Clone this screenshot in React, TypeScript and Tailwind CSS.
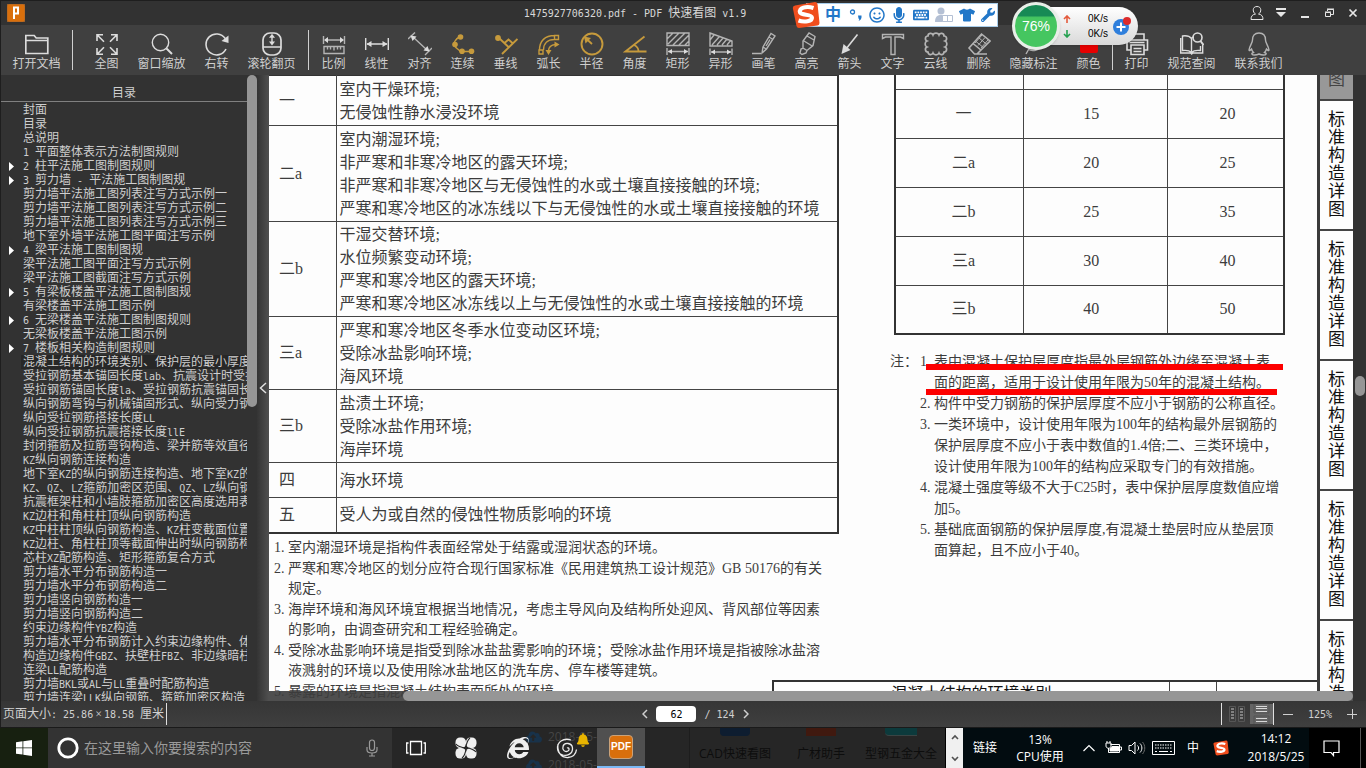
import { useState } from 'react'
import type { ReactNode } from 'react'
import {
  FaBell,
  FaCloudUploadAlt,
  FaInternetExplorer,
  FaKeyboard,
  FaMicrophone,
  FaRegSmile,
  FaTshirt,
  FaWrench,
} from 'react-icons/fa'

interface Tool {
  label: string
  icon: ReactNode
  wide?: boolean
}

interface OutlineItem {
  title: string
  expandable?: boolean
}

interface Note {
  no: string
  lines: string[]
}

const GOLD = '#c69a3c'
const LIGHT = '#dcdcdc'
const GREY = '#b4b4b4'

function Glyph({ color = LIGHT, children }: { color?: string; children: ReactNode }) {
  return (
    <svg viewBox="0 0 24 24" className="w-6 h-6" fill="none" stroke={color} strokeWidth="1.4">
      {children}
    </svg>
  )
}

// Latin runs are half as wide as a Chinese character
function MixedText({ text }: { text: string }) {
  return (
    <>
      {text.split(/([\x20-\x7e]+)/).map((part, index) =>
        index % 2 === 1 ? (
          <span key={index} className="font-['DejaVu_Sans_Mono',monospace] text-[10px] whitespace-pre">{part}</span>
        ) : (
          part
        ),
      )}
    </>
  )
}

const OPEN_TOOL: Tool = {
  label: '打开文档',
  wide: true,
  icon: (
    <Glyph>
      <path d="M.8 21.5V3.5h8.4l2 2.5h11.6v15.5zM.8 8.5h22" strokeWidth="1.7" />
    </Glyph>
  ),
}

const VIEW_TOOLS: Tool[] = [
  {
    label: '全图',
    icon: (
      <Glyph>
        <path d="M2 9V2.700h6M2 2.700l7 7M16 2.700h6V9M22 2.700l-7 7M2 16v6.300h6M2 22.300l7-7M16 22.300h6V16M22 22.300l-7-7" strokeWidth="1.6" />
      </Glyph>
    ),
  },
  {
    label: '窗口缩放',
    wide: true,
    icon: (
      <Glyph>
        <circle cx="10.500" cy="10.500" r="8.200" />
        <path d="M16.500 16.500l5.500 5.500" strokeWidth="2" />
      </Glyph>
    ),
  },
  {
    label: '右转',
    icon: (
      <Glyph>
        <path d="M21 17a10.500 10.500 0 1 1-.8-10.500" strokeWidth="1.600" />
        <path d="M23.500 3.500v7.500l-7-2z" fill={LIGHT} stroke="none" />
      </Glyph>
    ),
  },
  {
    label: '滚轮翻页',
    wide: true,
    icon: (
      <Glyph>
        <rect x="3" y="1" width="18" height="22" rx="7" strokeWidth="1.700" />
        <path d="M3 15h18M12 4v7" />
        <path d="M12 1.800l3 4H9zM12 13.500l3-4H9z" fill={LIGHT} stroke="none" />
      </Glyph>
    ),
  },
]

const DRAW_TOOLS: Tool[] = [
  {
    label: '比例',
    icon: (
      <Glyph color={GREY}>
        <path d="M1.500 4v8M22.500 4v8M3 8h18" />
        <path d="M2 8l4-3v6zM22 8l-4-3v6z" fill={LIGHT} stroke="none" />
        <path d="M2 14.500h20v7H2zM5.500 14.500v3M8.500 14.500v3M12 14.500v4M15.500 14.500v3M18.500 14.500v3" />
      </Glyph>
    ),
  },
  {
    label: '线性',
    icon: (
      <Glyph>
        <path d="M.7 6v12M23.300 6v12M2 12h20" />
        <path d="M1.500 12l5-3v6zM22.500 12l-5-3v6z" fill={LIGHT} stroke="none" />
      </Glyph>
    ),
  },
  {
    label: '对齐',
    icon: (
      <Glyph color={GREY}>
        <path d="M5 5l14 13M0 7l7-6.500M17 23l7-7" />
        <path d="M2.500 3.500l6 1-4 4.500zM21.500 19.500l-6-1 4-4.500z" fill={LIGHT} stroke="none" />
      </Glyph>
    ),
  },
  {
    label: '连续',
    icon: (
      <Glyph color={GOLD}>
        <path d="M10 4C4 7 1 12 4.500 15c1 1.500 3 2.500 5 4.500h11" />
        <g fill={GOLD} stroke="none">
          <circle cx="9.500" cy="5" r="2.800" />
          <circle cx="4" cy="12.500" r="2.800" />
          <circle cx="11" cy="19.300" r="2.800" />
          <circle cx="20.500" cy="19.300" r="2.800" />
        </g>
      </Glyph>
    ),
  },
  {
    label: '垂线',
    icon: (
      <Glyph color={GOLD}>
        <path d="M8 22L23.500 7M5 6l10 9.500M10.500 11l4-3.500 4.500 4" strokeWidth="1.900" />
        <circle cx="4" cy="6" r="2.900" fill={GOLD} stroke="none" />
      </Glyph>
    ),
  },
  {
    label: '弧长',
    icon: (
      <Glyph color={GOLD}>
        <path d="M2.500 18C2.500 9 8 3.500 17.500 3.500M6.500 18C6.500 11.500 10.500 7.500 17.500 7.500M2 18h4v4H2zM17.500 3.500h4v4h-4z" />
        <path d="M11.500 19c0-4 2-6 7-6.500" />
        <path d="M22.500 12.500l-5-3v6zM11.500 23l-3-5h6z" fill={GOLD} stroke="none" />
      </Glyph>
    ),
  },
  {
    label: '半径',
    icon: (
      <Glyph color={GOLD}>
        <circle cx="12" cy="12" r="10.500" strokeWidth="1.900" />
        <path d="M12 12L5.500 6" strokeWidth="1.800" />
        <path d="M4 4.500l7 1.500-5.500 5.500z" fill={GOLD} stroke="none" />
      </Glyph>
    ),
  },
  {
    label: '角度',
    icon: (
      <Glyph color={GOLD}>
        <path d="M21.500 4.500L2.500 19.500h21M11 13c3.500 1.500 4.500 3.500 4.500 6.500" strokeWidth="1.800" />
      </Glyph>
    ),
  },
  {
    label: '矩形',
    icon: (
      <Glyph color={GREY}>
        <path d="M1 1h22v12.500H1zM1 7l6-6M2 12L13 1M7 13L19 1M13 13L23 3M19 13l4-4M1 16v7M23 16v7M2 19.500h20" />
        <path d="M2 19.500l4-2.500v5zM22 19.500L18 17v5z" fill={LIGHT} stroke="none" />
      </Glyph>
    ),
  },
  {
    label: '异形',
    icon: (
      <Glyph color={GREY}>
        <path d="M1 1l22 8v5H1zM1 8l4-5M3 13l7-8M8 13l6-7M13 13l5-6M18 13l4-5M1 16.500V23M23 16.500V23M2 20h20" />
        <path d="M2 20l4-2.500v5zM22 20l-4-2.500v5z" fill={LIGHT} stroke="none" />
      </Glyph>
    ),
  },
  {
    label: '画笔',
    icon: (
      <Glyph color={GREY}>
        <path d="M0 21.500h9M10 21l1-6L19 1.500 23 4l-8.500 13zM11 15l4 2.500M17 5l4 2.500M14 14l4-6.500" />
      </Glyph>
    ),
  },
  {
    label: '高亮',
    icon: (
      <Glyph color={GREY}>
        <path d="M5 21l1-4 2-1 4 2.500-1 2.500-4 1.500zM8 16V9l6-8 6 3.500-2 9-6 5zM9 9l9 5.500M12 4l7 4" />
      </Glyph>
    ),
  },
  {
    label: '箭头',
    icon: (
      <Glyph>
        <path d="M19.500 2.500L8 17" strokeWidth="1.600" />
        <path d="M3.500 22l2-10 7 6z" fill={LIGHT} stroke="none" />
      </Glyph>
    ),
  },
  {
    label: '文字',
    icon: (
      <Glyph color={GREY}>
        <path d="M1.500 6.500v-4h21v4l-3-1.500h-5.500v17.500h-4V5H4.500z" />
      </Glyph>
    ),
  },
  {
    label: '云线',
    icon: (
      <Glyph color={GREY}>
        <path d="M4 4c0-3 4-3.500 5-1 1-2.500 5-2.500 6 0 1-2.500 5-2 5 1 3 0 3.500 4 1 5 2.500 1 2.500 5 0 6 2.500 1 2 5-1 5 0 3-4 3.500-5 1-1 2.500-5 2.500-6 0-1 2.500-5 2-5-1-3 0-3.500-4-1-5-2.500-1-2.500-5 0-6C.5 8 1 4 4 4z" strokeWidth="1.700" />
      </Glyph>
    ),
  },
  {
    label: '删除',
    icon: (
      <Glyph color={GREY}>
        <path d="M2 16L14.500 2 23 9 10 22H7.500zM6 11.500l8.500 7M9 22h11" strokeWidth="1.600" />
        <path d="M9 9.500l8 6.500M12 6l8 6.500M15 3l-7 8M18 5.500l-7 8M21 8l-7 8" strokeWidth="1" />
      </Glyph>
    ),
  },
  {
    label: '隐藏标注',
    wide: true,
    icon: (
      <Glyph color={GREY}>
        <path d="M2 12c5-8 15-8 20 0-5 7-12 8-16 5M8 15l-4 7" />
        <circle cx="12" cy="11" r="3" />
      </Glyph>
    ),
  },
  {
    label: '颜色',
    icon: (
      <Glyph>
        <rect x="3" y="3" width="18" height="18" rx="2" fill="#e60000" stroke="none" />
      </Glyph>
    ),
  },
]

const SERVICE_TOOLS: Tool[] = [
  {
    label: '打印',
    icon: (
      <Glyph>
        <path d="M6 8V2h13v6M6 18H2V8h20.500v10H19M6 13h13v9.500H6zM8.500 16.500h8M8.500 19.500h8M4.500 10.500h15" strokeWidth="1.600" />
      </Glyph>
    ),
  },
  {
    label: '规范查阅',
    wide: true,
    icon: (
      <Glyph>
        <path d="M14 5c-1 0-2 .5-2.500 1.500C9.500 4 6 3.500 2.500 4v14.500c4-.5 7 0 9 2 2-2 5-2.500 9-2V14M11.500 6.500v14M.7 6v15h10l1 1 1-1h10V13" />
        <circle cx="17.500" cy="5.500" r="4.500" strokeWidth="1.600" />
        <path d="M20.500 9l3 4" strokeWidth="2" />
      </Glyph>
    ),
  },
  {
    label: '联系我们',
    wide: true,
    icon: (
      <Glyph color={GREY}>
        <path d="M12 1C7.500 1 5.500 4 5.500 8c0 3-3 6-3.500 10 .5 1.500 1.500 0 2.500-1 .5 2 1 2.500 2 3.500-3 1-1.500 2.500 1 2.500 2 0 3.500-.5 4.500-1 1 .5 2.500 1 4.500 1 2.500 0 4-1.500 1-2.500 1-1 1.500-1.500 2-3.500 1 1 2 2.500 2.500 1-.5-4-3.500-7-3.500-10 0-4-2-7-6.500-7z" />
      </Glyph>
    ),
  },
]

const OUTLINE: OutlineItem[] = [
  { title: '封面' },
  { title: '目录' },
  { title: '总说明' },
  { title: '1 平面整体表示方法制图规则' },
  { title: '2 柱平法施工图制图规则', expandable: true },
  { title: '3 剪力墙 - 平法施工图制图规', expandable: true },
  { title: '剪力墙平法施工图列表注写方式示例一' },
  { title: '剪力墙平法施工图列表注写方式示例二' },
  { title: '剪力墙平法施工图列表注写方式示例三' },
  { title: '地下室外墙平法施工图平面注写示例' },
  { title: '4 梁平法施工图制图规', expandable: true },
  { title: '梁平法施工图平面注写方式示例' },
  { title: '梁平法施工图截面注写方式示例' },
  { title: '5 有梁板楼盖平法施工图制图规', expandable: true },
  { title: '有梁楼盖平法施工图示例' },
  { title: '6 无梁楼盖平法施工图制图规则', expandable: true },
  { title: '无梁板楼盖平法施工图示例' },
  { title: '7 楼板相关构造制图规则', expandable: true },
  { title: '混凝土结构的环境类别、保护层的最小厚度' },
  { title: '受拉钢筋基本锚固长度lab、抗震设计时受拉' },
  { title: '受拉钢筋锚固长度la、受拉钢筋抗震锚固长度' },
  { title: '纵向钢筋弯钩与机械锚固形式、纵向受力钢筋' },
  { title: '纵向受拉钢筋搭接长度LL' },
  { title: '纵向受拉钢筋抗震搭接长度llE' },
  { title: '封闭箍筋及拉筋弯钩构造、梁并筋等效直径' },
  { title: 'KZ纵向钢筋连接构造' },
  { title: '地下室KZ的纵向钢筋连接构造、地下室KZ的' },
  { title: 'KZ、QZ、LZ箍筋加密区范围、QZ、LZ纵向钢筋' },
  { title: '抗震框架柱和小墙肢箍筋加密区高度选用表' },
  { title: 'KZ边柱和角柱柱顶纵向钢筋构造' },
  { title: 'KZ中柱柱顶纵向钢筋构造、KZ柱变截面位置' },
  { title: 'KZ边柱、角柱柱顶等截面伸出时纵向钢筋构造' },
  { title: '芯柱XZ配筋构造、矩形箍筋复合方式' },
  { title: '剪力墙水平分布钢筋构造一' },
  { title: '剪力墙水平分布钢筋构造二' },
  { title: '剪力墙竖向钢筋构造一' },
  { title: '剪力墙竖向钢筋构造二' },
  { title: '约束边缘构件YBZ构造' },
  { title: '剪力墙水平分布钢筋计入约束边缘构件、体积' },
  { title: '构造边缘构件GBZ、扶壁柱FBZ、非边缘暗柱' },
  { title: '连梁LL配筋构造' },
  { title: '剪力墙BKL或AL与LL重叠时配筋构造' },
  { title: '剪力墙连梁LLK纵向钢筋、箍筋加密区构造' },
]

const ENVIRONMENTS = [
  { grade: '一', height: 'h-[50px]', lines: ['室内干燥环境;', '无侵蚀性静水浸没环境'] },
  {
    grade: '二a',
    height: 'h-[96px]',
    lines: [
      '室内潮湿环境;',
      '非严寒和非寒冷地区的露天环境;',
      '非严寒和非寒冷地区与无侵蚀性的水或土壤直接接触的环境;',
      '严寒和寒冷地区的冰冻线以下与无侵蚀性的水或土壤直接接触的环境',
    ],
  },
  {
    grade: '二b',
    height: 'h-[95px]',
    lines: [
      '干湿交替环境;',
      '水位频繁变动环境;',
      '严寒和寒冷地区的露天环境;',
      '严寒和寒冷地区冰冻线以上与无侵蚀性的水或土壤直接接触的环境',
    ],
  },
  { grade: '三a', height: 'h-[73px]', lines: ['严寒和寒冷地区冬季水位变动区环境;', '受除冰盐影响环境;', '海风环境'] },
  { grade: '三b', height: 'h-[73px]', lines: ['盐渍土环境;', '受除冰盐作用环境;', '海岸环境'] },
  { grade: '四', height: 'h-[35px]', lines: ['海水环境'] },
  { grade: '五', height: 'h-[35px]', lines: ['受人为或自然的侵蚀性物质影响的环境'] },
]

const COVERS = [
  ['一', '15', '20'],
  ['二a', '20', '25'],
  ['二b', '25', '35'],
  ['三a', '30', '40'],
  ['三b', '40', '50'],
]

const ENVIRONMENT_NOTES: Note[] = [
  { no: '1.', lines: ['室内潮湿环境是指构件表面经常处于结露或湿润状态的环境。'] },
  { no: '2.', lines: ['严寒和寒冷地区的划分应符合现行国家标准《民用建筑热工设计规范》GB 50176的有关', '规定。'] },
  { no: '3.', lines: ['海岸环境和海风环境宜根据当地情况，考虑主导风向及结构所处迎风、背风部位等因素', '的影响，由调查研究和工程经验确定。'] },
  { no: '4.', lines: ['受除冰盐影响环境是指受到除冰盐盐雾影响的环境；受除冰盐作用环境是指被除冰盐溶', '液溅射的环境以及使用除冰盐地区的洗车房、停车楼等建筑。'] },
  { no: '5.', lines: ['暴露的环境是指混凝土结构表面所处的环境。'] },
]

const COVER_NOTES: Note[] = [
  { no: '1.', lines: ['表中混凝土保护层厚度指最外层钢筋外边缘至混凝土表', '面的距离，适用于设计使用年限为50年的混凝土结构。'] },
  { no: '2.', lines: ['构件中受力钢筋的保护层厚度不应小于钢筋的公称直径。'] },
  { no: '3.', lines: ['一类环境中，设计使用年限为100年的结构最外层钢筋的', '保护层厚度不应小于表中数值的1.4倍;二、三类环境中，', '设计使用年限为100年的结构应采取专门的有效措施。'] },
  { no: '4.', lines: ['混凝土强度等级不大于C25时，表中保护层厚度数值应增', '加5。'] },
  { no: '5.', lines: ['基础底面钢筋的保护层厚度,有混凝土垫层时应从垫层顶', '面算起，且不应小于40。'] },
]

const TAB_CHARS = ['标', '准', '构', '造', '详', '图']

function ToolButton({ tool }: { tool: Tool }) {
  return (
    <button className={`flex flex-col items-center shrink-0 ${tool.wide ? 'w-[67px]' : 'w-[43px]'}`}>
      {tool.icon}
      <span className="text-xs leading-4 whitespace-nowrap">{tool.label}</span>
    </button>
  )
}

function TitleBar() {
  return (
    <header className="relative flex items-center h-6 shrink-0 bg-[#323232] px-1.5">
      <svg viewBox="0 0 18 18" className="w-[18px] h-[18px]">
        <rect width="18" height="18" rx="2" fill="#d96f0c" stroke="#a8672c" />
        <path d="M7 15V3.500h4v6H8" fill="none" stroke="#fff" strokeWidth="2" />
      </svg>
      <h1 className="flex-1 pr-[115px] text-center text-xs text-[#d8d8d8]">
        <MixedText text="1475927706320.pdf - PDF 快速看图 v1.9" />
      </h1>
      <div className="absolute right-px flex items-center text-[#e6e6e6]">
        <button aria-label="用户" className="flex justify-center w-6">
          <svg viewBox="0 0 16 16" className="w-4 h-4" fill="none" stroke="currentColor">
            <path d="M8 1.500c-5 0-4.500 6-1.500 7.500-3 .5-4.500 2-4.500 5.500h12c0-3.500-1.500-5-4.500-5.500C12.500 7.500 13 1.500 8 1.500z" />
          </svg>
        </button>
        <button aria-label="菜单" className="flex justify-center w-6">
          <svg viewBox="0 0 12 12" className="w-3 h-3" fill="currentColor">
            <path d="M1 1h10v2H1zM1 5h10L6 10z" />
          </svg>
        </button>
        <button aria-label="最小化" className="flex justify-center w-6">
          <svg viewBox="0 0 12 12" className="w-3 h-3" stroke="currentColor" strokeWidth="2">
            <path d="M2 10h8" />
          </svg>
        </button>
        <button aria-label="还原" className="flex justify-center w-6">
          <svg viewBox="0 0 12 12" className="w-3 h-3" fill="none" stroke="currentColor">
            <path d="M4.500 4V2.500h6v5H8M2.500 5.500h5v4h-5zM4 2h7M2 5h6" />
          </svg>
        </button>
        <button aria-label="关闭" className="flex justify-center w-6">
          <svg viewBox="0 0 12 12" className="w-3 h-3" stroke="currentColor" strokeWidth="1.700">
            <path d="M2.500 2.500l7 7M9.500 2.500l-7 7" />
          </svg>
        </button>
      </div>
    </header>
  )
}

function Toolbar() {
  return (
    <nav className="flex h-[50px] shrink-0 bg-[#404040] pt-[7px] text-[#cfcfcf]">
      <div className="flex justify-center w-[71px]">
        <ToolButton tool={OPEN_TOOL} />
      </div>
      <div className="w-px h-10 -mt-0.5 mr-3 bg-[#d0d0d0]" />
      {VIEW_TOOLS.map((tool) => <ToolButton key={tool.label} tool={tool} />)}
      <div className="w-px h-10 -mt-0.5 mx-[3px] bg-[#d0d0d0]" />
      {DRAW_TOOLS.map((tool) => <ToolButton key={tool.label} tool={tool} />)}
      <div className="w-px h-10 -mt-0.5 mx-0.5 bg-[#d0d0d0]" />
      {SERVICE_TOOLS.map((tool) => <ToolButton key={tool.label} tool={tool} />)}
    </nav>
  )
}

function OutlinePanel() {
  const [selected, setSelected] = useState(18)

  return (
    <aside className="flex w-[268px] shrink-0 bg-[#323232] text-[#cfcfcf]">
      <div className="flex flex-col w-[246px] overflow-hidden">
        <h2 className="h-[27px] shrink-0 pt-2.5 text-center text-xs leading-4 border-b border-[#808080]">目录</h2>
        <ul className="pt-px">
          {OUTLINE.map((item, index) => (
            <li key={index} className="flex items-center h-3.5 pl-2">
              <span className="w-3 shrink-0">
                {item.expandable && (
                  <svg viewBox="0 0 5 9" className="block w-[5px] h-[9px]">
                    <path d="M0 0l5 4.500L0 9z" fill="#fff" />
                  </svg>
                )}
              </span>
              <button
                onClick={() => setSelected(index)}
                className={`flex-1 h-3.5 pl-0.5 text-left text-xs leading-[14px] whitespace-nowrap ${
                  selected === index ? 'bg-[#272727]' : ''
                }`}
              >
                <MixedText text={item.title} />
              </button>
            </li>
          ))}
        </ul>
      </div>
      <div className="w-2.5">
        <div className="h-[332px] rounded-full bg-[#969696]" />
      </div>
      <button aria-label="收起目录" className="flex-1 flex items-center justify-center bg-gradient-to-r from-[#343434] to-[#505050]">
        <svg viewBox="0 0 8 12" className="w-2 h-3" fill="none" stroke="#e0e0e0" strokeWidth="1.500">
          <path d="M7 1L1.500 6 7 11" />
        </svg>
      </button>
    </aside>
  )
}

function NoteList({ notes, lineClass, bodyClass }: { notes: Note[]; lineClass: string; bodyClass: string }) {
  return (
    <ol className={bodyClass}>
      {notes.map((note) => (
        <li key={note.no} className="flex">
          <span className={`w-3.5 shrink-0 ${lineClass}`}>{note.no}</span>
          <div>
            {note.lines.map((line) => (
              <p key={line} className={`whitespace-nowrap ${lineClass}`}>{line}</p>
            ))}
          </div>
        </li>
      ))}
    </ol>
  )
}

function EnvironmentColumn() {
  return (
    <div className="flex-[570] min-w-0">
      <table className="w-full border-collapse border-t border-r-2 border-b-2 border-[#333]">
        <tbody>
          {ENVIRONMENTS.map((row) => (
            <tr key={row.grade} className={`border-b border-[#444] ${row.height}`}>
              <th scope="row" className="w-[67px] pl-2.5 text-left text-base font-normal border-r border-[#444]">
                {row.grade}
              </th>
              <td className="pl-[3px] text-base leading-[23px] whitespace-nowrap">
                {row.lines.map((line) => <p key={line}>{line}</p>)}
              </td>
            </tr>
          ))}
        </tbody>
      </table>
      <NoteList notes={ENVIRONMENT_NOTES} lineClass="text-sm leading-5" bodyClass="mt-1 ml-[5px] space-y-px" />
    </div>
  )
}

function CoverColumn() {
  return (
    <div className="flex-[391] min-w-0">
      <table className="w-full table-fixed border-collapse border-x-2 border-b-2 border-[#333]">
        <colgroup>
          <col className="w-[33%]" />
          <col className="w-[37%]" />
          <col className="w-[30%]" />
        </colgroup>
        <tbody>
          <tr className="h-3.5 border-b border-[#444]">
            <td className="border-r border-[#444]" />
            <td className="border-r border-[#444]" />
            <td />
          </tr>
          {COVERS.map(([grade, first, second]) => (
            <tr key={grade} className="h-[49px] text-center text-base border-b border-[#444]">
              <th scope="row" className="pl-2 font-normal border-r border-[#444]">{grade}</th>
              <td className="pr-2 border-r border-[#444]">{first}</td>
              <td className="pl-1">{second}</td>
            </tr>
          ))}
        </tbody>
      </table>
      <div className="relative flex mt-4 -ml-1">
        <span className="w-[30px] shrink-0 text-sm leading-[21px] whitespace-nowrap">注：</span>
        <NoteList notes={COVER_NOTES} lineClass="text-sm leading-[21px]" bodyClass="" />
        {/* red underline marks drawn over the text */}
        <div className="absolute left-9 right-0.5 top-[13px] h-1.5 bg-[#fd0000]" />
        <div className="absolute left-9 right-2 top-[38px] h-1.5 bg-[#fd0000]" />
      </div>
    </div>
  )
}

function ChapterTabs() {
  return (
    <div className="w-9 shrink-0 border-l-[3px] border-[#3a3a3a] text-[17px] leading-[18px] text-[#111]">
      <div className="flex items-end justify-center h-6 pb-2.5 bg-[#989898] text-[#444]">图</div>
      {[0, 1, 2, 3, 4].map((tab) => (
        <div key={tab} className="flex flex-col items-center justify-center h-[130px] border-t-2 border-[#444]">
          {TAB_CHARS.map((char) => <span key={char}>{char}</span>)}
        </div>
      ))}
    </div>
  )
}

function DocumentView() {
  return (
    <main className="relative flex-1 flex min-w-0 overflow-hidden bg-[#fdfdfd] text-[#3c3c3c]">
      <div className="flex-1 min-w-0">
        <div className="flex gap-[55px] h-[605px] pr-8">
          <EnvironmentColumn />
          <CoverColumn />
        </div>
        <div className="flex w-[52%] ml-auto h-16 border-t-2 border-l-2 border-[#333] text-base leading-6 text-[#111]">
          <div className="flex-1 text-center">混凝土结构的环境类别</div>
          <div className="w-12 border-x border-[#444]" />
          <div className="w-[100px]" />
        </div>
      </div>
      <ChapterTabs />
      {/* horizontal scrollbar floats above the page */}
      <div className="absolute inset-x-0 bottom-0 h-2.5 pl-[134px] bg-[#3c3c3c]/90">
        <div className="h-full rounded-full bg-[#969696]" />
      </div>
    </main>
  )
}

function StatusBar() {
  const [page, setPage] = useState('62')

  return (
    <footer className="flex items-center h-[26px] shrink-0 bg-gradient-to-b from-[#363636] to-[#3f3f3f] text-xs text-[#d0d0d0]">
      <div className="flex-1 flex items-center">
        <span className="h-[22px] pl-0.5 pr-0.5 leading-[22px] border-r border-[#e0e0e0]">
          <MixedText text="页面大小: 25.86" />
          <span className="px-0.5">×</span>
          <MixedText text="18.58 厘米" />
        </span>
      </div>
      <div className="flex items-center gap-2 ml-6">
        <button aria-label="上一页">
          <svg viewBox="0 0 6 10" className="w-1.5 h-2.5" fill="none" stroke="currentColor" strokeWidth="1.500">
            <path d="M5 1L1 5l4 4" />
          </svg>
        </button>
        <input
          aria-label="页码"
          value={page}
          onChange={(e) => setPage(e.target.value)}
          className="w-10 h-4 rounded bg-white text-center font-['DejaVu_Sans_Mono',monospace] text-[10px] text-black"
        />
        <span><MixedText text="/ 124" /></span>
        <button aria-label="下一页">
          <svg viewBox="0 0 6 10" className="w-1.5 h-2.5" fill="none" stroke="currentColor" strokeWidth="1.500">
            <path d="M1 1l4 4-4 4" />
          </svg>
        </button>
      </div>
      <div className="flex-1 flex items-center justify-end">
        <div className="flex items-center h-[22px] pl-1.5 border-x border-[#e0e0e0]">
          <button aria-label="双页" className="mr-1">
            <svg viewBox="0 0 18 18" className="w-[18px] h-[18px]" fill="none">
              <path d="M1.500 1.500h6v15h-6zM10.500 1.500h6v15h-6z" stroke="#565656" />
              <path d="M3 4h3M3 7h3M3 10h3M3 13h3M12 4h3M12 7h3M12 10h3M12 13h3" stroke="#c8c8c8" />
            </svg>
          </button>
          <button aria-label="连续页" className="bg-[#646464]">
            <svg viewBox="0 0 23 20" className="w-[23px] h-5" fill="none">
              <path d="M4 0v9h15V0M4 20v-8h15v8" stroke="#555" />
              <path d="M6 2.500h11M6 4.500h11M6 7.500h11M6 14.500h11M6 17.500h11" stroke="#d8d8d8" />
            </svg>
          </button>
        </div>
        <button aria-label="缩小" className="flex justify-center w-7">
          <svg viewBox="0 0 10 10" className="w-2.5 h-2.5" stroke="currentColor"><path d="M0 5.500h10" /></svg>
        </button>
        <span className="w-9 text-center"><MixedText text="125%" /></span>
        <button aria-label="放大" className="flex justify-center w-7">
          <svg viewBox="0 0 10 10" className="w-2.5 h-2.5" stroke="currentColor"><path d="M0 5.500h10M5.500 0v10" /></svg>
        </button>
      </div>
    </footer>
  )
}

function SogouLogo({ className }: { className: string }) {
  return (
    <svg viewBox="0 0 28 28" className={className}>
      <path d="M3 4.500L23 1q2 0 2.500 2l2 19q0 2-2 2.500L7 27q-2 0-2.500-2L.8 7q-.3-2 2.200-2.500z" fill="#f04e1e" />
      <path d="M21.500 7C14 4.500 6.500 7 8 11.500c1.500 3 11.500 1.500 12 5 .5 4-8 5-13.500 3" fill="none" stroke="#fff" strokeWidth="4" />
    </svg>
  )
}

function ImeBar() {
  return (
    <div className="absolute top-px left-[792px] flex items-center h-[27px]">
      <SogouLogo className="relative z-10 w-7 h-7" />
      <div className="flex items-center h-6 -ml-3.5 pl-4 pr-0.5 gap-1.5 border border-[#a9cdea] bg-white text-[#2277c8]">
        <span className="w-5 text-center text-base leading-5 font-bold">中</span>
        <svg viewBox="0 0 14 14" className="w-3.5 h-3.5">
          <circle cx="3.500" cy="4" r="2" fill="none" stroke="currentColor" strokeWidth="1.300" />
          <path d="M9 7.500h3.500c.5 3-1 5-3 5.500 1-1.500 1-2 0-2.500z" fill="currentColor" />
        </svg>
        <FaRegSmile className="w-4 h-4" />
        <FaMicrophone className="w-4 h-4" />
        <FaKeyboard className="w-4 h-4" />
        <svg viewBox="0 0 18 16" className="w-[18px] h-4" fill="#b4c0d4">
          <circle cx="6" cy="4" r="3.500" />
          <path d="M0 15c0-6 3-7 6-7 2 0 3 .5 4 1v6z" />
          <path d="M7.500 8.500h10v6h-10zM12.500 8.500v6" fill="#fff" stroke="#b4c0d4" />
        </svg>
        <FaTshirt className="w-4 h-4" />
        <FaWrench className="w-3.5 h-3.5" />
      </div>
    </div>
  )
}

function NetworkBall() {
  return (
    <div className="absolute top-0.5 left-[1012px] flex items-center h-12">
      <div className="relative z-10 flex items-center justify-center w-12 h-12 rounded-full border-[3px] border-[#e8eee8] bg-gradient-to-b from-[#178a55] from-25% to-[#45c660] to-30% text-sm text-white shadow">
        76%
      </div>
      <div className="flex items-center h-[38px] w-[102px] -ml-6 pl-6 pr-1.5 rounded-r-full bg-gradient-to-b from-white to-[#d9d9d9] text-black shadow">
        <div className="flex flex-col gap-[7px] ml-[3px]">
          <svg viewBox="0 0 8 8" className="w-2 h-2" fill="none" stroke="#e45a3c" strokeWidth="1.600">
            <path d="M4 8V1M1 4l3-3 3 3" />
          </svg>
          <svg viewBox="0 0 8 8" className="w-2 h-2" fill="none" stroke="#25a050" strokeWidth="1.600">
            <path d="M4 0v7M1 4l3 3 3-3" />
          </svg>
        </div>
        <div className="flex-1 pr-1 text-right text-[10px] leading-[15px]">
          <p>0K/s</p>
          <p>0K/s</p>
        </div>
        <svg viewBox="0 0 20 20" className="w-5 h-5">
          <circle cx="9" cy="11" r="8" fill="#2f7fdc" />
          <path d="M9 6.500v9M4.500 11h9" stroke="#fff" strokeWidth="2" />
          <circle cx="15" cy="5" r="4" fill="#dc2b2b" />
        </svg>
      </div>
    </div>
  )
}

function Taskbar() {
  return (
    <div className="flex h-[41px] shrink-0 border-t border-[#1a1a1a] bg-[#262626] font-['Open_Sans','Noto_Sans_CJK_SC',sans-serif] text-xs text-white">
      <button aria-label="开始" className="flex items-center justify-center w-12 bg-[#172010]">
        <svg viewBox="0 0 16 16" className="w-4 h-4" fill="#fff">
          <path d="M0 2.200l6.500-.9v6.200H0zM7.300 1.200L16 0v7.500H7.300zM0 8.300h6.500v6.300L0 13.700zM7.300 8.300H16V16l-8.700-1.200z" />
        </svg>
      </button>
      <label className="flex items-center w-[344px] pl-2 pr-3.5 bg-[#333]">
        <svg viewBox="0 0 24 24" className="w-6 h-6" fill="none" stroke="#fff" strokeWidth="2.800">
          <circle cx="12" cy="12" r="9.200" />
        </svg>
        <input
          aria-label="搜索"
          placeholder="在这里输入你要搜索的内容"
          className="flex-1 min-w-0 ml-1 text-sm placeholder:text-[#9a9a9a]"
        />
        <svg viewBox="0 0 12 18" className="w-3 h-[18px]" fill="none" stroke="#9a9a9a" strokeWidth="1.200">
          <rect x="3.500" y="1" width="5" height="10.500" rx="2.500" />
          <path d="M1 8v3c0 4 10 4 10 0V8M6 14v3M3 17h6" />
        </svg>
      </label>
      <button aria-label="任务视图" className="flex items-center justify-center w-12">
        <svg viewBox="0 0 20 16" className="w-5 h-4" fill="none" stroke="#fff" strokeWidth="1.300">
          <path d="M4.500 1.500h11v13h-11zM2.500 3H.7v10h1.800M17.500 3h1.800v10h-1.800" />
        </svg>
      </button>
      <div className="relative flex w-[157px]">
        {/* window behind the translucent bar */}
        <div className="absolute left-[86px] top-0 w-[71px] h-10 overflow-hidden text-xs text-[#454545]">
          <p className="flex items-center gap-1.5 h-[17px] whitespace-nowrap">
            <FaCloudUploadAlt className="w-4 h-4 shrink-0 text-[#18324a]" />2018-05-24
          </p>
          <p className="flex items-center gap-1.5 h-[39px] whitespace-nowrap">
            <FaCloudUploadAlt className="w-4 h-4 shrink-0 text-[#18324a]" />2018-05-08
          </p>
        </div>
        <button aria-label="浏览器助手" className="relative flex items-center justify-center w-[52px]">
          <svg viewBox="0 0 24 24" className="w-6 h-6" fill="#f0f0f0">
            <rect x="1.500" y="1.500" width="10.500" height="10.500" rx="4.500" />
            <rect x="12" y="1.500" width="10.500" height="10.500" rx="4.500" />
            <rect x="1.500" y="12" width="10.500" height="10.500" rx="4.500" />
            <rect x="12" y="12" width="10.500" height="10.500" rx="4.500" />
            <path d="M12 12C7 12 3 9.500 2 8M12 12c0-5 2.500-9 4-10M12 12c5 0 9 2.500 10 4M12 12c0 5-2.500 9-4 10" fill="none" stroke="#262626" strokeWidth="1.100" />
          </svg>
        </button>
        <button aria-label="Internet Explorer" className="relative flex items-center justify-center w-[52px]">
          <FaInternetExplorer className="w-[22px] h-[22px] text-[#f0f0f0]" />
        </button>
        <button aria-label="提醒" className="relative flex items-center justify-center w-[46px]">
          <svg viewBox="0 0 24 24" className="w-6 h-6" fill="none" stroke="#ececec" strokeWidth="1.300">
            <path d="M12 12c2-1 3 2 1 3-3 1.500-6-1-5-4.500C9 6 17 6.500 17.500 12c.5 6-6 9-11 6.500C1 16 1.500 8 6 5c3-2 7-2 10-1M3 8c-1 8 3 14 10 13.500 5-.5 8-4 8.500-8" />
          </svg>
          <FaBell className="absolute right-0 top-[5px] w-3.5 h-3.5 text-[#e8b400]" />
        </button>
      </div>
      <button aria-label="PDF 快速看图" className="relative flex items-center justify-center w-12 border-b-2 border-[#7ab8f5] bg-[#505050]">
        <span className="flex items-center justify-center w-6 h-6 rounded-sm border border-[#c9a27a] bg-[#d96f0c] font-['Liberation_Sans',sans-serif] text-[10px] font-bold">
          PDF
        </span>
      </button>
      <div className="flex flex-1 min-w-0 ml-11 border-l border-[#1d1d1d] text-[#0d0d0d]">
        <div className="flex flex-col items-center w-[90px]">
          <div className="w-[30px] h-2 rounded-b bg-[#0e1d30]" />
          <span className="mt-2.5">CAD快速看图</span>
        </div>
        <div className="flex flex-col items-center w-[74px] ml-1">
          <div className="w-[30px] h-2 bg-[#40190f]" />
          <span className="mt-2.5">广材助手</span>
        </div>
        <div className="flex flex-col items-center w-[86px]">
          <div className="w-8 h-2 rounded-bl border-b border-[#3a4444] bg-[#0c3a3c]" />
          <span className="mt-2.5 whitespace-nowrap">型钢五金大全</span>
        </div>
      </div>
      <div className="flex flex-col items-center justify-between w-[18px] py-1.5 border-l border-black bg-[#f0f0f0]">
        <svg viewBox="0 0 8 6" className="w-2 h-1.5" fill="none" stroke="#505050" strokeWidth="1.600"><path d="M1 5l3-3 3 3" /></svg>
        <svg viewBox="0 0 8 6" className="w-2 h-1.5" fill="none" stroke="#505050" strokeWidth="1.600"><path d="M1 1l3 3 3-3" /></svg>
      </div>
      <div className="flex items-center bg-[#020c10]">
        <span className="w-11 text-center">链接</span>
        <div className="w-[66px] text-center leading-[17px]">
          <p>13%</p>
          <p>CPU使用</p>
        </div>
        <button aria-label="显示隐藏的图标" className="flex justify-center w-8">
          <svg viewBox="0 0 12 8" className="w-3 h-2" fill="none" stroke="#fff" strokeWidth="1.200"><path d="M.5 7L6 1.500 11.500 7" /></svg>
        </button>
        <svg viewBox="0 0 17 14" className="w-[17px] h-3.5" fill="none" stroke="#fff">
          <path d="M5.500 3.500h9v8h-11V9M15 6h1.500v3H15M1 2v3c0 3 5 3 5 0V2zM2 0v2M5 0v2M3.500 7v3" />
          <path d="M7 5.500h6.500v4.500H5V8z" fill="#fff" />
        </svg>
        <svg viewBox="0 0 18 16" className="w-[18px] h-4 ml-1.5" fill="none" stroke="#fff">
          <path d="M1 5.500h2.500L7 2v12L3.500 10.500H1zM9.500 5.500c1.500 1.500 1.500 3.500 0 5M12 3.500c2.500 2.500 2.500 6.500 0 9" />
          <path d="M14.500 2c3 3.500 3 8.500 0 12" stroke="#6a6a6a" />
        </svg>
        <svg viewBox="0 0 23 14" className="w-[23px] h-3.5 ml-1.5" fill="none" stroke="#fff">
          <path d="M.5.5h22v13H.5z" />
          <path d="M3 4h17M3 7h17" strokeDasharray="1.500 1" />
          <path d="M3 10.500h2M7 10.500h9M18 10.500h2" />
        </svg>
        <span className="w-9 text-center">中</span>
        <SogouLogo className="w-4 h-4 ml-0.5" />
        <div className="w-[66px] ml-3.5 text-center leading-[18px]">
          <p>14:12</p>
          <p>2018/5/25</p>
        </div>
      </div>
      <div className="flex items-center w-[52px] pl-3.5 bg-black border-r border-[#555]">
        <button aria-label="操作中心">
          <svg viewBox="0 0 17 17" className="w-[17px] h-[17px]" fill="none" stroke="#fff" strokeWidth="1.200">
            <path d="M1 1h15v11.500h-5.500v3L8 12.500H1z" />
          </svg>
        </button>
      </div>
      <div className="w-[5px] bg-black" />
    </div>
  )
}

function App() {
  return (
    <div className="relative flex flex-col w-full h-screen overflow-hidden bg-[#323232] font-['Liberation_Serif','Noto_Sans_CJK_SC',serif]">
      <div className="flex-1 flex flex-col min-h-0 border-t border-l border-[#1e1e1e]">
        <TitleBar />
        <Toolbar />
        <div className="flex-1 flex min-h-0 overflow-hidden">
          <OutlinePanel />
          <DocumentView />
          <div className="flex justify-center w-[13px] shrink-0 bg-[#323232] pt-[301px]">
            <div className="w-2.5 h-5 rounded-full bg-[#969696]" />
          </div>
        </div>
        <StatusBar />
      </div>
      <Taskbar />
      <div className="font-['Liberation_Sans','Noto_Sans_CJK_SC',sans-serif]">
        <ImeBar />
        <NetworkBall />
      </div>
    </div>
  )
}

export default App
